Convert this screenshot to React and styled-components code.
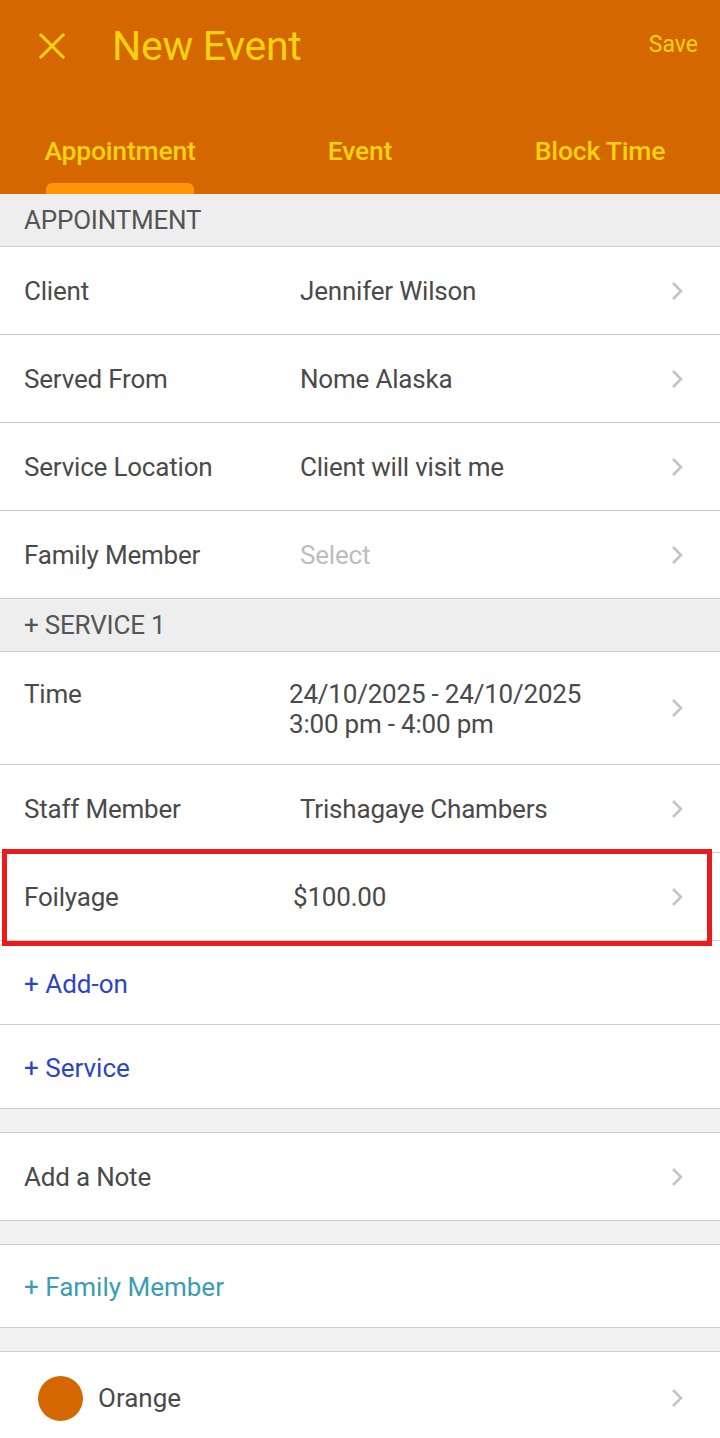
import React from "react";
import styled, { createGlobalStyle } from "styled-components";

const Global = createGlobalStyle`
  html, body { margin: 0; padding: 0; background: #fff; }
  body { font-family: Roboto, "Noto Sans", Arial, sans-serif; -webkit-font-smoothing: antialiased; }
  * { box-sizing: border-box; }
`;

const Page = styled.div`
  width: 720px;
  min-height: 1438px;
  background: #fff;
  overflow: hidden;
`;

const Header = styled.header`
  background: #d46700;
  height: 194px;
  display: flex;
  flex-direction: column;
`;

const TopBar = styled.div`
  height: 92px;
  display: flex;
  align-items: center;
  padding: 0 22px 0 34px;
`;

const CloseBtn = styled.button`
  width: 36px;
  height: 36px;
  padding: 0;
  border: none;
  background: none;
  display: flex;
  align-items: center;
  justify-content: center;
  margin-right: 42px;
`;

const Title = styled.h1`
  margin: 0;
  flex: 1;
  font-size: 41px;
  font-weight: 400;
  color: #f4d20f;
  letter-spacing: -0.3px;
`;

const SaveBtn = styled.button`
  border: none;
  background: none;
  padding: 0;
  font-family: inherit;
  font-size: 23px;
  color: #f4d20f;
  margin-top: -4px;
`;

const Tabs = styled.nav`
  flex: 1;
  display: grid;
  grid-template-columns: repeat(3, 1fr);
`;

const Tab = styled.div`
  position: relative;
  display: flex;
  align-items: center;
  justify-content: center;
  padding-top: 14px;
  font-size: 26.5px;
  font-weight: 500;
  color: #f4d20f;
  letter-spacing: -0.2px;
`;

const Indicator = styled.span`
  position: absolute;
  bottom: 0;
  left: 46px;
  width: 148px;
  height: 11px;
  background: #ff9405;
  border-radius: 6px 6px 0 0;
`;

const SectionHeader = styled.div`
  height: ${(p) => p.$h || 53}px;
  background: #eeeeee;
  border-bottom: 1px solid #cdcdcd;
  display: flex;
  align-items: center;
  padding: 0 24px;
  font-size: 26px;
  color: #555;
  text-transform: uppercase;
  letter-spacing: -0.2px;
`;

const Spacer = styled.div`
  height: 24px;
  background: #f2f2f2;
  border-bottom: 1px solid #cdcdcd;
`;

const Row = styled.div`
  position: relative;
  min-height: ${(p) => p.$h || 88}px;
  display: flex;
  align-items: ${(p) => (p.$top ? "flex-start" : "center")};
  padding: ${(p) => (p.$top ? "27px" : "0")} 36px 0 24px;
  border-bottom: ${(p) => (p.$noBorder ? "none" : "1px solid #cdcdcd")};
  background: #fff;
  ${(p) =>
    p.$highlight &&
    `&::after {
      content: "";
      position: absolute;
      top: -4px;
      bottom: -6px;
      left: 2px;
      right: 8px;
      border: 5px solid #e81c1c;
      pointer-events: none;
    }`}
`;

const Label = styled.div`
  width: ${(p) => p.$w || 276}px;
  flex-shrink: 0;
  font-size: 26px;
  line-height: 30px;
  color: #4a4a4a;
  letter-spacing: -0.2px;
`;

const Value = styled.div`
  flex: 1;
  font-size: 26px;
  line-height: 30px;
  color: ${(p) => (p.$placeholder ? "#bdbdbd" : "#4a4a4a")};
  letter-spacing: -0.2px;
`;

const Chevron = styled.span`
  display: flex;
  align-items: center;
  align-self: center;
  ${(p) => p.$top && "margin-top: -27px;"}
`;

const LinkRow = styled.div`
  height: ${(p) => p.$h || 84}px;
  display: flex;
  align-items: center;
  padding: 2px 24px 0;
  border-bottom: 1px solid #cdcdcd;
  font-size: 26px;
  color: ${(p) => p.$color};
  background: #fff;
`;

const Dot = styled.span`
  width: 45px;
  height: 45px;
  border-radius: 50%;
  background: #d46700;
  margin: 0 15px 0 14px;
  flex-shrink: 0;
`;

const ColorName = styled.div`
  flex: 1;
  font-size: 26px;
  color: #4a4a4a;
`;

const ChevronIcon = () => (
  <svg width="14" height="22" viewBox="0 0 14 22">
    <path d="M3 3 L11 11 L3 19" fill="none" stroke="#c4c4c4" strokeWidth="2.6" />
  </svg>
);

const CloseIcon = () => (
  <svg width="28" height="28" viewBox="0 0 28 28">
    <path d="M3 3 L25 25 M25 3 L3 25" stroke="#f4d20f" strokeWidth="3" strokeLinecap="square" />
  </svg>
);

const InfoRow = ({ label, value, placeholder, valueOffset, highlight }) => (
  <Row $highlight={highlight}>
    <Label $w={valueOffset}>{label}</Label>
    <Value $placeholder={placeholder}>{value}</Value>
    <Chevron>
      <ChevronIcon />
    </Chevron>
  </Row>
);

export default function App() {
  return (
    <Page>
      <Global />
      <Header>
        <TopBar>
          <CloseBtn aria-label="Close">
            <CloseIcon />
          </CloseBtn>
          <Title>New Event</Title>
          <SaveBtn>Save</SaveBtn>
        </TopBar>
        <Tabs>
          <Tab>
            Appointment
            <Indicator />
          </Tab>
          <Tab>Event</Tab>
          <Tab>Block Time</Tab>
        </Tabs>
      </Header>

      <SectionHeader>Appointment</SectionHeader>
      <InfoRow label="Client" value="Jennifer Wilson" />
      <InfoRow label="Served From" value="Nome Alaska" />
      <InfoRow label="Service Location" value="Client will visit me" />
      <InfoRow label="Family Member" value="Select" placeholder />

      <SectionHeader>+ Service 1</SectionHeader>
      <Row $h={113} $top>
        <Label $w={265}>Time</Label>
        <Value>
          24/10/2025 - 24/10/2025
          <br />
          3:00 pm - 4:00 pm
        </Value>
        <Chevron $top>
          <ChevronIcon />
        </Chevron>
      </Row>
      <InfoRow label="Staff Member" value="Trishagaye Chambers" />
      <InfoRow label="Foilyage" value="$100.00" valueOffset={269} highlight />

      <LinkRow $color="#2b45c4">+ Add-on</LinkRow>
      <LinkRow $color="#2b45c4">+ Service</LinkRow>
      <Spacer />
      <InfoRow label="Add a Note" value="" />
      <Spacer />
      <LinkRow $color="#3a9db3" $h={83}>+ Family Member</LinkRow>
      <Spacer />
      <Row $noBorder $h={92}>
        <Dot />
        <ColorName>Orange</ColorName>
        <Chevron>
          <ChevronIcon />
        </Chevron>
      </Row>
    </Page>
  );
}
